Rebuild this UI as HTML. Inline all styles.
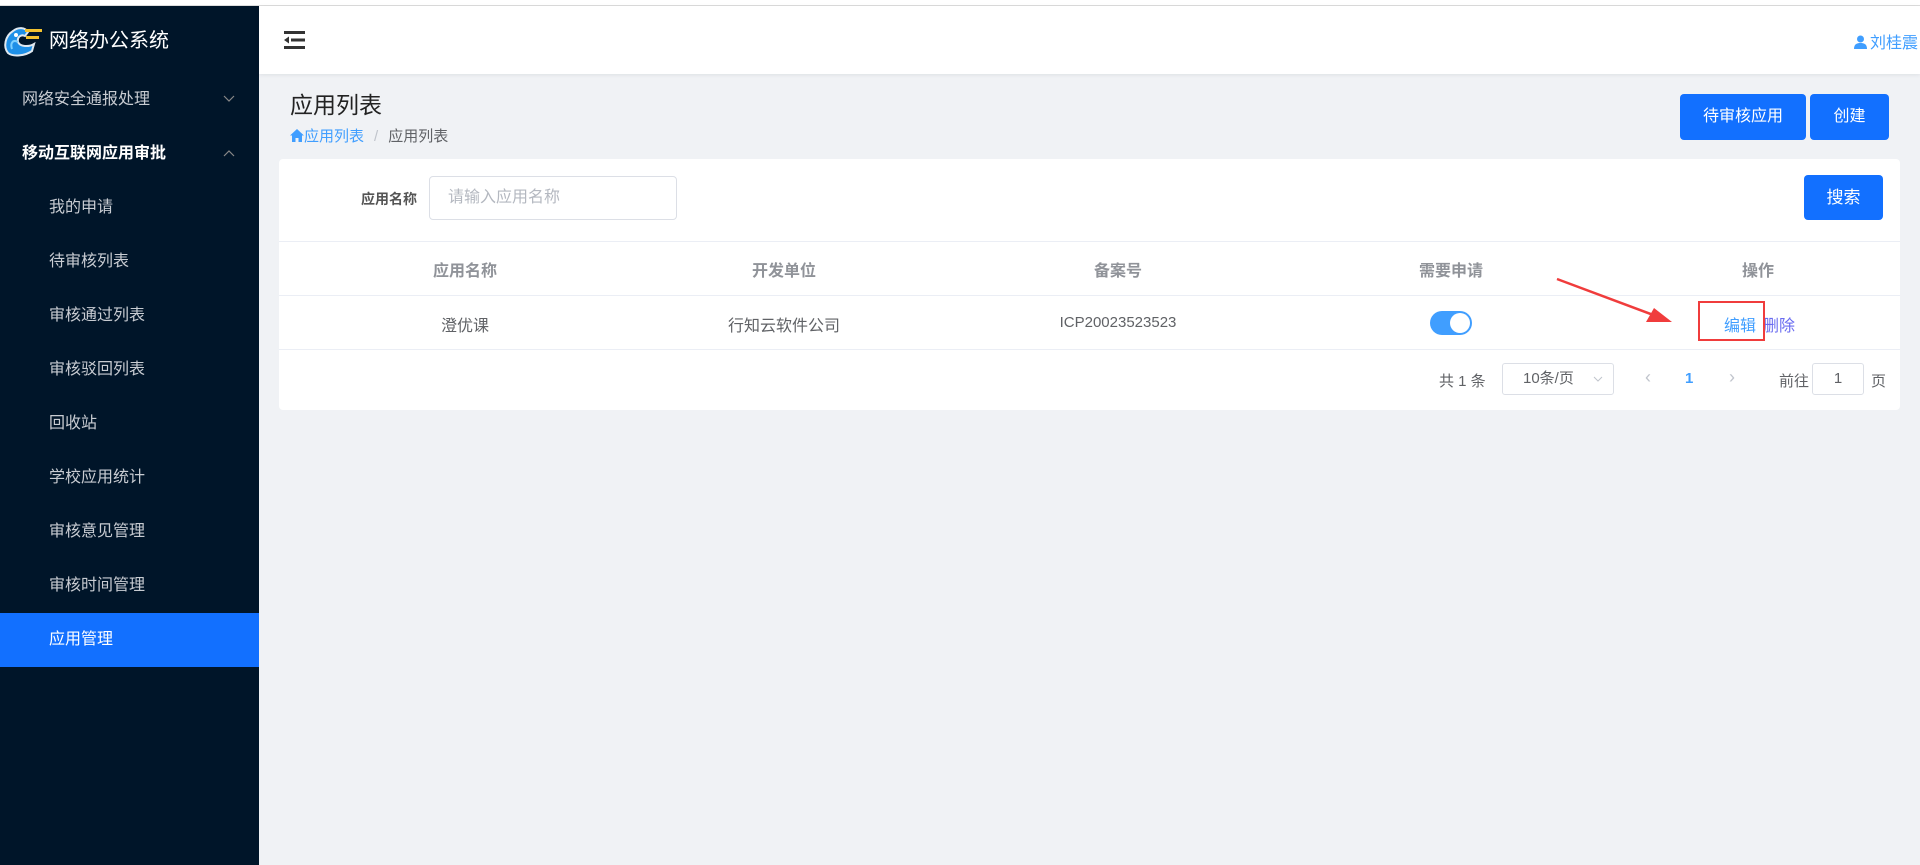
<!DOCTYPE html>
<html><head><meta charset="utf-8"><style>
*{margin:0;padding:0;box-sizing:border-box}
body{width:1920px;height:865px;overflow:hidden;background:#f0f2f5;font-family:"Liberation Sans","Noto Sans CJK SC",sans-serif;position:relative;font-size:14px;color:#606266}
.abs{position:absolute}
#topline{left:0;top:0;width:1920px;height:6px;background:#fff;border-bottom:1px solid #ddd}
#side{left:0;top:6px;width:259px;height:859px;background:#001529}
#hdr{left:259px;top:6px;width:1661px;height:68px;background:#fff;box-shadow:0 1px 4px rgba(0,21,41,.08)}
.mi{position:absolute;left:0;width:259px;height:54px;line-height:54px;color:#c8ccd2;font-size:16px}
.btn{position:absolute;background:#1270ff;color:#fff;border-radius:4px;text-align:center;font-size:15px}
.c{position:absolute;text-align:center;transform:translateX(-50%);white-space:nowrap}
.chev{position:absolute;right:24px;top:22px}
</style></head><body>
<div class="abs" id="topline"></div>
<div class="abs" id="side">
 <svg class="abs" style="left:2px;top:17px" width="42" height="36" viewBox="0 0 42 36">
  <path d="M6 30 C1 24 3 13 11 8 C16 4 23 4 26 9 L23 13 C19 11 15 14 16 19 C18 24 27 24 32 21 L30 28 C23 33 11 34 6 30Z" fill="#1e90e8" stroke="#dfe8f0" stroke-width="2"/>
  <path d="M10 26 C8 20 11 16 16 19" stroke="#7cd0ff" stroke-width="2" fill="none"/>
  <rect x="23" y="6" width="17" height="3" fill="#f2c230"/><rect x="24" y="13" width="13" height="3" fill="#f2c230"/>
  <circle cx="14" cy="12" r="2" fill="#fff"/>
 </svg>
 <div class="abs" style="left:49px;top:18px;color:#fff;font-size:20px">网络办公系统</div>
 <div class="mi" style="top:67px;padding-left:22px">网络安全通报处理<svg class="chev" width="12" height="8" viewBox="0 0 12 8"><path d="M1 1 L6 6 L11 1" stroke="#888" fill="none" stroke-width="1.2"/></svg></div>
 <div class="mi" style="top:121px;padding-left:22px;color:#fff;font-weight:bold">移动互联网应用审批<svg class="chev" width="12" height="8" viewBox="0 0 12 8"><path d="M1 7 L6 2 L11 7" stroke="#888" fill="none" stroke-width="1.2"/></svg></div>
 <div class="mi" style="top:175px;padding-left:49px">我的申请</div>
 <div class="mi" style="top:229px;padding-left:49px">待审核列表</div>
 <div class="mi" style="top:283px;padding-left:49px">审核通过列表</div>
 <div class="mi" style="top:337px;padding-left:49px">审核驳回列表</div>
 <div class="mi" style="top:391px;padding-left:49px">回收站</div>
 <div class="mi" style="top:445px;padding-left:49px">学校应用统计</div>
 <div class="mi" style="top:499px;padding-left:49px">审核意见管理</div>
 <div class="mi" style="top:553px;padding-left:49px">审核时间管理</div>
 <div class="mi" style="top:607px;padding-left:49px;background:#1270ff;color:#fff">应用管理</div>
</div>
<div class="abs" id="hdr">
 <svg class="abs" style="left:25px;top:25px" width="22" height="18" viewBox="0 0 22 18"><rect x="0" y="0" width="21" height="3" fill="#333"/><rect x="7" y="7.5" width="14" height="3" fill="#333"/><rect x="0" y="15" width="21" height="3" fill="#333"/><path d="M0 9 L5 5.5 V12.5Z" fill="#333"/></svg>
 <div class="abs" style="right:2px;top:23px;color:#409eff;font-size:16px;white-space:nowrap"><svg width="13" height="14" viewBox="0 0 13 14" style="vertical-align:-1px;margin-right:3px"><circle cx="6.5" cy="4" r="3.5" fill="#409eff"/><path d="M0 14 C0 9 3 8 6.5 8 C10 8 13 9 13 14Z" fill="#409eff"/></svg>刘桂震</div>
</div>
<div class="abs" style="left:290px;top:86px;font-size:23px;color:#222">应用列表</div>
<div class="abs" style="left:290px;top:125px;font-size:15px;white-space:nowrap"><span style="color:#409eff"><svg width="14" height="13" viewBox="0 0 14 13" style="vertical-align:-1px"><path d="M7 0 L14 6.5 H12 V13 H8.5 V9 H5.5 V13 H2 V6.5 H0Z" fill="#409eff"/></svg>应用列表</span><span style="color:#c0c4cc;margin:0 10px">/</span><span style="color:#606266">应用列表</span></div>
<div class="btn" style="left:1680px;top:94px;width:126px;height:46px;line-height:46px;font-size:16px">待审核应用</div>
<div class="btn" style="left:1810px;top:94px;width:79px;height:46px;line-height:46px;font-size:16px">创建</div>
<div class="abs" style="left:279px;top:159px;width:1621px;height:251px;background:#fff;border-radius:4px">
 <div class="abs" style="left:82px;top:30px;font-weight:bold;font-size:14px;color:#555">应用名称</div>
 <div class="abs" style="left:150px;top:17px;width:248px;height:44px;border:1px solid #dcdfe6;border-radius:4px;padding-left:18px;line-height:42px;color:#b4b8c0;font-size:16px">请输入应用名称</div>
 <div class="btn" style="left:1525px;top:16px;width:79px;height:45px;line-height:45px;font-size:17px">搜索</div>
 <div class="abs" style="left:0;top:82px;width:1621px;height:1px;background:#ebeef5"></div>
 <div class="abs" style="left:0;top:136px;width:1621px;height:1px;background:#ebeef5"></div>
 <div class="abs" style="left:0;top:190px;width:1621px;height:1px;background:#ebeef5"></div>
 <div class="c" style="left:186px;top:98px;font-size:16px;color:#909399;font-weight:bold">应用名称</div>
 <div class="c" style="left:505px;top:98px;font-size:16px;color:#909399;font-weight:bold">开发单位</div>
 <div class="c" style="left:839px;top:98px;font-size:16px;color:#909399;font-weight:bold">备案号</div>
 <div class="c" style="left:1172px;top:98px;font-size:16px;color:#909399;font-weight:bold">需要申请</div>
 <div class="c" style="left:1479px;top:98px;font-size:16px;color:#909399;font-weight:bold">操作</div>
 <div class="c" style="left:186px;top:153px;font-size:16px">澄优课</div>
 <div class="c" style="left:505px;top:153px;font-size:16px">行知云软件公司</div>
 <div class="c" style="left:839px;top:155px;font-size:15px">ICP20023523523</div>
 <div class="abs" style="left:1151px;top:152px;width:42px;height:24px;border-radius:12px;background:#409eff"><div class="abs" style="right:2px;top:2px;width:20px;height:20px;border-radius:50%;background:#fff"></div></div>
 <div class="abs" style="left:1445px;top:153px;font-size:16px;color:#409eff">编辑</div>
 <div class="abs" style="left:1484px;top:153px;font-size:16px;color:#6a6cf0">删除</div>
 <div class="abs" style="left:1419px;top:142px;width:67px;height:40px;border:2px solid #f03c3c"></div>
 <div class="abs" style="left:1160px;top:211px;font-size:15px">共 1 条</div>
 <div class="abs" style="left:1223px;top:204px;width:112px;height:32px;border:1px solid #dcdfe6;border-radius:3px;line-height:30px;padding-left:20px;font-size:15px">10条/页<svg style="position:absolute;right:10px;top:12px" width="10" height="6" viewBox="0 0 10 6"><path d="M1 1 L5 5 L9 1" stroke="#c0c4cc" fill="none"/></svg></div>
 <div class="abs" style="left:1366px;top:208px;color:#c0c4cc;font-size:18px">‹</div>
 <div class="abs" style="left:1406px;top:211px;color:#409eff;font-weight:bold;font-size:15px">1</div>
 <div class="abs" style="left:1450px;top:208px;color:#c0c4cc;font-size:18px">›</div>
 <div class="abs" style="left:1500px;top:211px;font-size:15px">前往</div>
 <div class="abs" style="left:1533px;top:204px;width:52px;height:32px;border:1px solid #dcdfe6;border-radius:3px;line-height:30px;text-align:center;font-size:15px">1</div>
 <div class="abs" style="left:1592px;top:211px;font-size:15px">页</div>
</div>
<svg class="abs" style="left:0;top:0" width="1920" height="865"><line x1="1557" y1="279" x2="1656" y2="316" stroke="#f03c3c" stroke-width="2.5"/><path d="M1672 322 L1646 322 L1654 308Z" fill="#f03c3c"/></svg>
</body></html>
